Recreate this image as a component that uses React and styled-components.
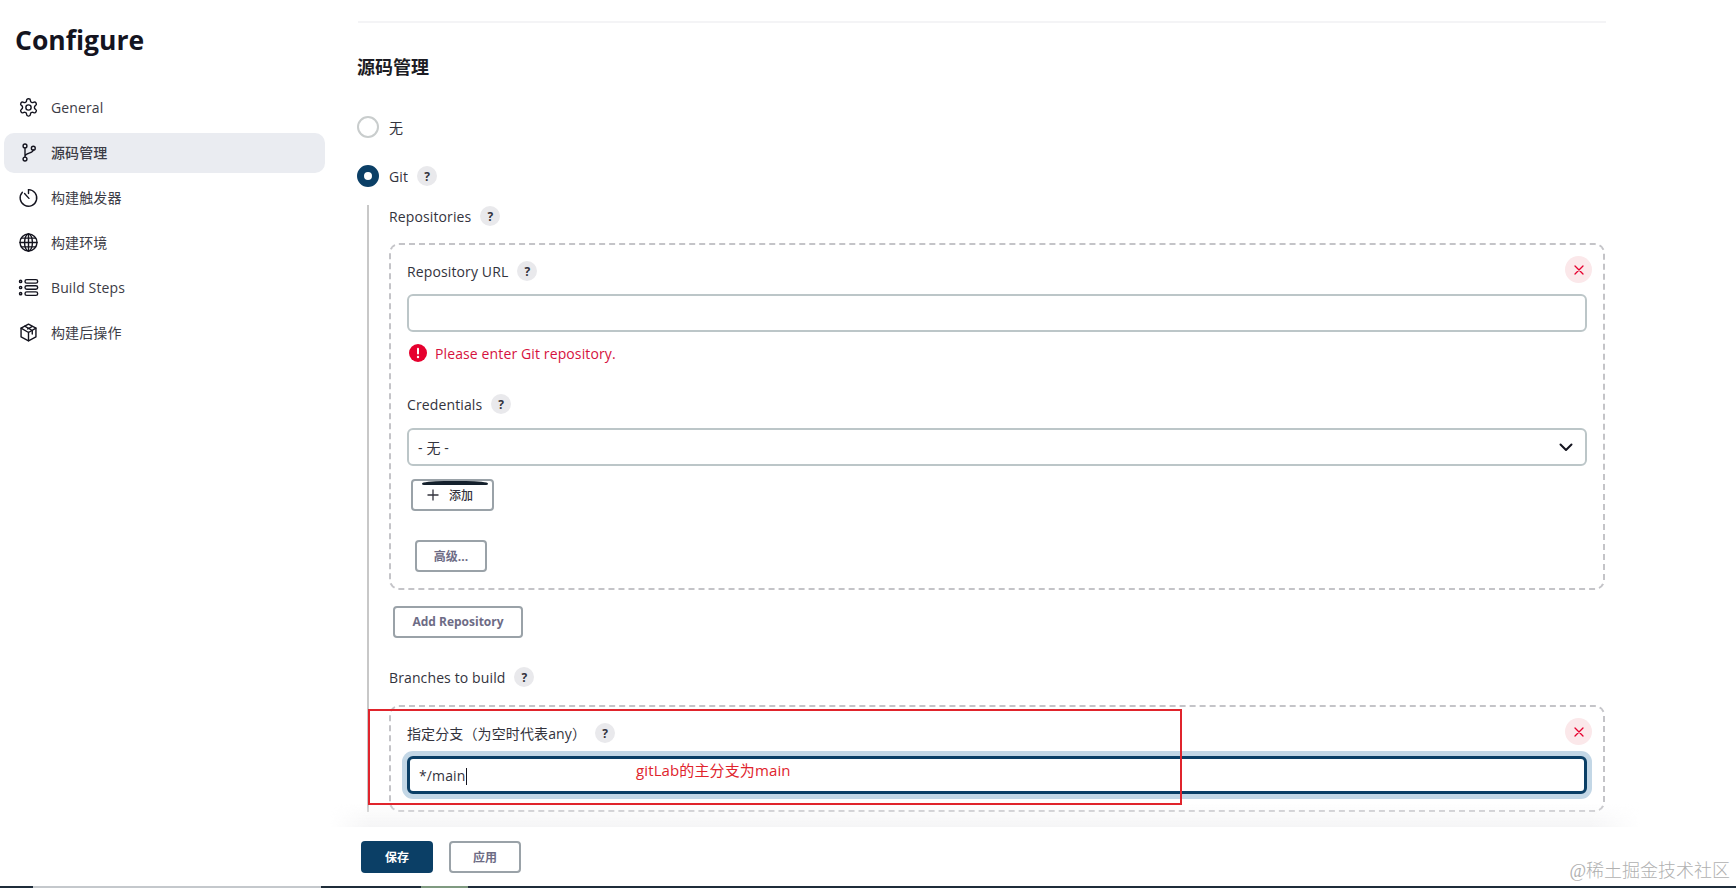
import React from 'react';
import styled, { createGlobalStyle } from 'styled-components';

const FONT = `"Open Sans", "Noto Sans", "Noto Sans CJK SC", sans-serif`;

const Global = createGlobalStyle`
  html, body { margin: 0; padding: 0; background: #fff; }
  body { font-family: ${FONT}; color: #14141f; font-size: 14px; letter-spacing: 0.12px; }
`;

const Page = styled.div`
  position: relative;
  width: 1736px;
  height: 888px;
  overflow: hidden;
  display: flex;
  flex-direction: column;
`;

const Columns = styled.div`
  flex: 1;
  min-height: 0;
  display: grid;
  grid-template-columns: 357px 1249px;
`;

const Sidebar = styled.aside`
  padding: 0 0 0 4px;
`;

const Title = styled.h1`
  margin: 0;
  padding: 20px 0 0 11px;
  height: 67px;
  font-size: 26.5px;
  line-height: 40px;
  font-weight: 700;
  letter-spacing: 0;
  color: #14141f;
`;

const Nav = styled.nav`
  width: 321px;
  display: flex;
  flex-direction: column;
  gap: 5px;
  margin-top: 1px;
`;

const NavItem = styled.a`
  height: 40px;
  box-sizing: border-box;
  padding: 0 0 2px 14px;
  display: flex;
  align-items: center;
  gap: 12px;
  border-radius: 10px;
  font-size: 14px;
  color: #3c3c46;
  background: ${(p) => (p.$active ? '#eaecf1' : 'transparent')};
  font-weight: ${(p) => (p.$active ? 500 : 400)};
  svg { width: 21px; height: 21px; flex: none; color: #14141f; }
`;

const Main = styled.main`
  min-height: 0;
  overflow: hidden;
`;

const TopRule = styled.div`
  height: 2px;
  margin: 21px 0 0 1px;
  background: #f4f4f6;
`;

const SectionTitle = styled.h2`
  margin: 32px 0 0;
  font-size: 18px;
  line-height: 24px;
  font-weight: 700;
  letter-spacing: 0;
  color: #1c1c24;
`;

const RadioRow = styled.label`
  display: flex;
  align-items: center;
  gap: 10px;
  height: 24px;
  margin-top: ${(p) => p.$top}px;
  color: #33333d;
`;

const Radio = styled.span`
  width: 22px;
  height: 22px;
  box-sizing: border-box;
  border-radius: 50%;
  flex: none;
  border: ${(p) => (p.$on ? '7px solid #0b3f66' : '2px solid #c9cdcd')};
  background: #fff;
`;

const Help = styled.span`
  width: 20px;
  height: 20px;
  border-radius: 50%;
  background: #e9e9ec;
  color: #33333d;
  font-size: 12px;
  font-weight: 700;
  display: inline-flex;
  align-items: center;
  justify-content: center;
  margin-left: ${(p) => p.$gap || 9}px;
  flex: none;
`;

const GitBlock = styled.div`
  margin: 17px 0 0 10px;
  border-left: 2px solid #c8c8c8;
  padding-left: 20px;
`;

const Label = styled.div`
  display: flex;
  align-items: center;
  height: 22px;
  color: #33333d;
  margin-top: ${(p) => p.$top || 0}px;
`;

const DashedBox = styled.div`
  position: relative;
  margin-top: ${(p) => p.$top}px;
  height: ${(p) => p.$height}px;
  box-sizing: border-box;
  width: 1216px;
  border: 2px dashed #c4c4c8;
  border-radius: 10px;
  padding: ${(p) => p.$pad}px 16px 0 16px;
`;

const Remove = styled.button`
  position: absolute;
  top: 11px;
  right: 11px;
  width: 27px;
  height: 27px;
  padding: 0;
  border: 0;
  border-radius: 50%;
  background: #fbe8ea;
  display: flex;
  align-items: center;
  justify-content: center;
  color: #e6002e;
  svg { width: 10px; height: 10px; }
`;

const TextBox = styled.div`
  height: 38px;
  margin-top: ${(p) => p.$top}px;
  box-sizing: border-box;
  border-radius: 6px;
  background: #fff;
  display: flex;
  align-items: center;
  justify-content: space-between;
  padding: 0 9px;
  color: #33333d;
  border: ${(p) => (p.$focus ? '3px solid #0b3f66' : '2px solid #bcc6c8')};
  box-shadow: ${(p) => (p.$focus ? '0 0 0 5px #c3d7e6' : 'none')};
  svg { width: 16px; height: 16px; margin-right: 2px; }
`;

const Caret = styled.span`
  display: inline-block;
  width: 1px;
  height: 17px;
  margin-left: 1px;
  background: #14141f;
  vertical-align: -4px;
`;

const ErrorRow = styled.div`
  display: flex;
  align-items: center;
  gap: 8px;
  margin: 12px 0 0 2px;
  height: 18px;
  color: #d6123e;
  svg { width: 18px; height: 18px; }
`;

const OutlineButton = styled.button`
  display: flex;
  align-items: center;
  justify-content: center;
  box-sizing: border-box;
  width: ${(p) => p.$w}px;
  height: ${(p) => p.$h || 32}px;
  margin: ${(p) => p.$m || 0};
  padding: 0 0 1px;
  border: 2px solid #9aa2a8;
  border-radius: 4px;
  background: #fff;
  font-family: ${FONT};
  font-size: 12px;
  font-weight: 700;
  color: #6d6b85;
`;

const AddButton = styled(OutlineButton)`
  position: relative;
  color: #33333d;
  font-weight: 500;
  gap: 9px;
  justify-content: flex-start;
  padding: 0 0 1px 13px;
  svg { width: 14px; height: 14px; }
`;

const Smudge = styled.span`
  position: absolute;
  top: 0;
  left: 9px;
  right: 4px;
  height: 4px;
  background: #14202c;
  border-radius: 50% 50% 3px 3px / 100% 100% 2px 2px;
`;

const Fade = styled.div`
  position: absolute;
  left: 330px;
  top: 803px;
  width: 1310px;
  height: 24px;
  background: linear-gradient(to bottom, rgba(245, 245, 246, 0), #f5f5f6);
  mask-image: linear-gradient(to right, transparent, #000 40px, #000 calc(100% - 50px), transparent);
`;

const Footer = styled.footer`
  position: relative;
  flex: none;
  height: 59px;
  padding: 14px 0 0 361px;
  box-sizing: border-box;
  display: flex;
  gap: 16px;
  background: #fff;
`;

const SaveButton = styled.button`
  width: 72px;
  height: 32px;
  padding: 0;
  border: 0;
  border-radius: 4px;
  background: #0b3f66;
  color: #fff;
  font-family: ${FONT};
  font-size: 12px;
  font-weight: 700;
`;

const TaskStrip = styled.div`
  position: relative;
  flex: none;
  height: 2px;
  display: grid;
  grid-template-columns: 33px 288px 100px 47px 1fr;
  background: #1f2d3a;
`;

const StripPart = styled.span`
  background: ${(p) => p.$color};
`;

const RedFrame = styled.div`
  position: absolute;
  left: 368px;
  top: 709px;
  width: 814px;
  height: 96px;
  box-sizing: border-box;
  border: 2px solid #e0242c;
`;

const Note = styled.span`
  position: absolute;
  left: 636px;
  top: 760px;
  font-size: 15px;
  line-height: 20px;
  color: #e0242c;
`;

const Watermark = styled.span`
  position: absolute;
  right: 6px;
  top: 859px;
  font-family: "Liberation Serif", "Noto Sans CJK SC", serif;
  font-size: 18px;
  font-weight: 300;
  line-height: 24px;
  letter-spacing: 0;
  color: #b0b0b0;
`;

const stroke = { fill: 'none', stroke: 'currentColor', strokeWidth: 1.6, strokeLinecap: 'round', strokeLinejoin: 'round' };

const GearIcon = () => (
  <svg viewBox="0 0 24 24" {...stroke}>
    <circle cx="12" cy="12" r="3" />
    <path d="M12.2 2h-.4a2 2 0 0 0-2 2v.2a2 2 0 0 1-1 1.7l-.4.2a2 2 0 0 1-2 0l-.2-.1a2 2 0 0 0-2.7.7l-.2.4a2 2 0 0 0 .7 2.7l.2.1a2 2 0 0 1 1 1.7v.5a2 2 0 0 1-1 1.8l-.2.1a2 2 0 0 0-.7 2.7l.2.4a2 2 0 0 0 2.7.7l.2-.1a2 2 0 0 1 2 0l.4.2a2 2 0 0 1 1 1.7v.2a2 2 0 0 0 2 2h.4a2 2 0 0 0 2-2v-.2a2 2 0 0 1 1-1.7l.4-.2a2 2 0 0 1 2 0l.2.1a2 2 0 0 0 2.7-.7l.2-.4a2 2 0 0 0-.7-2.7l-.2-.1a2 2 0 0 1-1-1.7v-.5a2 2 0 0 1 1-1.8l.2-.1a2 2 0 0 0 .7-2.7l-.2-.4a2 2 0 0 0-2.7-.7l-.2.1a2 2 0 0 1-2 0l-.4-.2a2 2 0 0 1-1-1.7V4a2 2 0 0 0-2-2z" />
  </svg>
);

const BranchIcon = () => (
  <svg viewBox="0 0 24 24" {...stroke}>
    <circle cx="8" cy="4.5" r="2.2" />
    <circle cx="8" cy="19.5" r="2.2" />
    <circle cx="17.5" cy="7" r="2.2" />
    <path d="M8 6.7v10.6M17.5 9.2c0 4-9.5 3-9.5 7" />
  </svg>
);

const TimerIcon = () => (
  <svg viewBox="0 0 24 24" {...stroke}>
    <path d="M12 3a9.5 9.5 0 1 1-7 3" />
    <path d="M12 3v4.5" />
    <path d="M7.5 7.5l5 5.5" />
  </svg>
);

const GlobeIcon = () => (
  <svg viewBox="0 0 24 24" {...stroke}>
    <circle cx="12" cy="12" r="9.7" />
    <ellipse cx="12" cy="12" rx="4.5" ry="9.7" />
    <path d="M12 2.3v19.4M2.3 12h19.4M3.8 7h16.4M3.8 17h16.4" />
  </svg>
);

const StepsIcon = () => (
  <svg viewBox="0 0 24 24" {...stroke}>
    <circle cx="3" cy="5" r="1.3" />
    <circle cx="3" cy="12" r="1.3" />
    <circle cx="3" cy="19" r="1.3" />
    <rect x="8" y="3" width="14.5" height="4" rx="2" />
    <rect x="8" y="10" width="14.5" height="4" rx="2" />
    <rect x="8" y="17" width="14.5" height="4" rx="2" />
  </svg>
);

const BoxIcon = () => (
  <svg viewBox="0 0 24 24" {...stroke}>
    <path d="M12 2.5l8.5 4.5v10L12 21.5 3.5 17V7z" />
    <path d="M3.5 7l8.5 5 8.5-5M12 12v9.5" />
    <path d="M7.7 4.7l8.6 5v4M11 8l5-2.8" />
  </svg>
);

const CloseIcon = () => (
  <svg viewBox="0 0 10 10" fill="none" stroke="currentColor" strokeWidth="1.3" strokeLinecap="round">
    <path d="M1 1l8 8M9 1l-8 8" />
  </svg>
);

const Chevron = () => (
  <svg viewBox="0 0 16 16" fill="none" stroke="#14141f" strokeWidth="2" strokeLinecap="round" strokeLinejoin="round">
    <path d="M2.5 5.5L8 11l5.5-5.5" />
  </svg>
);

const ErrorIcon = () => (
  <svg viewBox="0 0 18 18">
    <circle cx="9" cy="9" r="9" fill="#e6002e" />
    <rect x="8" y="3.8" width="2" height="6.8" rx="1" fill="#fff" />
    <circle cx="9" cy="13" r="1.2" fill="#fff" />
  </svg>
);

const PlusIcon = () => (
  <svg viewBox="0 0 14 14" fill="none" stroke="#33333d" strokeWidth="1.3">
    <path d="M7 1.5v11M1.5 7h11" />
  </svg>
);

const navItems = [
  { label: 'General', icon: <GearIcon /> },
  { label: '源码管理', icon: <BranchIcon />, active: true },
  { label: '构建触发器', icon: <TimerIcon /> },
  { label: '构建环境', icon: <GlobeIcon /> },
  { label: 'Build Steps', icon: <StepsIcon /> },
  { label: '构建后操作', icon: <BoxIcon /> },
];

export default function App() {
  return (
    <Page>
      <Global />
      <Columns>
        <Sidebar>
          <Title>Configure</Title>
          <Nav>
            {navItems.map((item) => (
              <NavItem key={item.label} $active={item.active}>
                {item.icon}
                {item.label}
              </NavItem>
            ))}
          </Nav>
        </Sidebar>
        <Main>
          <TopRule />
          <SectionTitle>源码管理</SectionTitle>
          <RadioRow $top={36}>
            <Radio />无
          </RadioRow>
          <RadioRow $top={25}>
            <Radio $on />Git<Help $gap={-1}>?</Help>
          </RadioRow>
          <GitBlock>
            <Label>
              Repositories<Help>?</Help>
            </Label>
            <DashedBox $top={16} $height={347} $pad={15}>
              <Remove>
                <CloseIcon />
              </Remove>
              <Label>
                Repository URL<Help>?</Help>
              </Label>
              <TextBox $top={12} />
              <ErrorRow>
                <ErrorIcon />
                Please enter Git repository.
              </ErrorRow>
              <Label $top={31}>
                Credentials<Help>?</Help>
              </Label>
              <TextBox $top={13}>
                - 无 -
                <Chevron />
              </TextBox>
              <AddButton $w={83} $h={32} $m="13px 0 0 4px">
                <Smudge />
                <PlusIcon />
                添加
              </AddButton>
              <OutlineButton $w={72} $m="29px 0 0 8px">
                高级...
              </OutlineButton>
            </DashedBox>
            <OutlineButton $w={130} $m="16px 0 0 4px">
              Add Repository
            </OutlineButton>
            <Label $top={28}>
              Branches to build<Help>?</Help>
            </Label>
            <DashedBox $top={17} $height={107} $pad={15}>
              <Remove>
                <CloseIcon />
              </Remove>
              <Label>
                指定分支（为空时代表any）<Help>?</Help>
              </Label>
              <TextBox $top={12} $focus>
                <span>
                  */main
                  <Caret />
                </span>
              </TextBox>
            </DashedBox>
          </GitBlock>
        </Main>
      </Columns>
      <Fade />
      <Footer>
        <SaveButton>保存</SaveButton>
        <OutlineButton $w={72}>应用</OutlineButton>
      </Footer>
      <TaskStrip>
        <StripPart $color="#1f2d3a" />
        <StripPart $color="#c4c8cc" />
        <StripPart $color="#1f2d3a" />
        <StripPart $color="#7f9a80" />
        <StripPart $color="#1f2d3a" />
      </TaskStrip>
      <RedFrame />
      <Note>gitLab的主分支为main</Note>
      <Watermark>@稀土掘金技术社区</Watermark>
    </Page>
  );
}
